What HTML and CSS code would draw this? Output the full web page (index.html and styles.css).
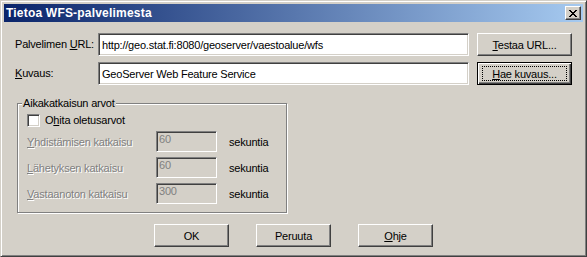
FILE: index.html
```html
<html>
<head>
    <meta charset="UTF-8">
    <title>Tietoa WFS-palvelimesta</title>
    <link rel="stylesheet" href="styles.css">
</head>
<body>
<div class="window">
    <div class="titlebar">
        <span class="title">Tietoa WFS-palvelimesta</span>
        <span class="close-btn">
            <svg width="8" height="7" viewBox="0 0 8 7" shape-rendering="crispEdges">
                <path d="M0 0h2v1h-2z M6 0h2v1h-2z M1 1h2v1h-2z M5 1h2v1h-2z M2 2h4v1h-4z M3 3h2v1h-2z M2 4h4v1h-4z M1 5h2v1h-2z M5 5h2v1h-2z M0 6h2v1h-2z M6 6h2v1h-2z" fill="#000"/>
            </svg>
        </span>
    </div>

    <div class="dialog-body">
        <div class="field-row">
            <label class="field-label" for="server-url">Palvelimen <u>U</u>RL:</label>
            <input class="edit wide" type="text" id="server-url" value="http://geo.stat.fi:8080/geoserver/vaestoalue/wfs">
            <button class="button side-btn"><u>T</u>estaa URL...</button>
        </div>

        <div class="field-row">
            <label class="field-label" for="description"><u>K</u>uvaus:</label>
            <input class="edit wide" type="text" id="description" value="GeoServer Web Feature Service">
            <button class="button side-btn default"><span class="focus-ring"><u>H</u>ae kuvaus...</span></button>
        </div>

        <div class="group">
            <span class="group-title">Aikakatkaisun arvot</span>
            <label class="check-row">
                <span class="checkbox"></span>
                <span>O<u>h</u>ita oletusarvot</span>
            </label>

            <div class="timeout-grid">
                <span class="disabled-text"><u>Y</u>hdistämisen katkaisu</span>
                <input class="edit disabled" type="text" value="60" disabled>
                <span class="unit">sekuntia</span>

                <span class="disabled-text"><u>L</u>ähetyksen katkaisu</span>
                <input class="edit disabled" type="text" value="60" disabled>
                <span class="unit">sekuntia</span>

                <span class="disabled-text"><u>V</u>astaanoton katkaisu</span>
                <input class="edit disabled" type="text" value="300" disabled>
                <span class="unit">sekuntia</span>
            </div>
        </div>

        <div class="actions">
            <button class="button dialog-btn">OK</button>
            <button class="button dialog-btn">Peruuta</button>
            <button class="button dialog-btn"><u>O</u>hje</button>
        </div>
    </div>
</div>
</body>
</html>
```

FILE: styles.css
```css
:root {
    --face: #D4D0C8;
    --shadow: #808080;
    --dark-shadow: #404040;
    --highlight: #FFFFFF;
}

body, html {
    margin: 0;
    padding: 0;
    background-color: var(--face);
    font-family: 'Liberation Sans', Arial, sans-serif;
    font-size: 11px;
    letter-spacing: -0.2px;
    color: #000;
}

u {
    text-decoration: underline;
    text-underline-offset: 1px;
}

.window {
    box-sizing: border-box;
    width: 587px;
    height: 257px;
    background-color: var(--face);
    border: 1px solid;
    border-color: var(--face) var(--dark-shadow) var(--dark-shadow) var(--face);
    box-shadow: inset 1px 1px 0 var(--highlight), inset -1px -1px 0 var(--shadow);
    padding: 3px;
    display: flex;
    flex-direction: column;
}

.titlebar {
    height: 18px;
    display: flex;
    align-items: center;
    justify-content: space-between;
    background: linear-gradient(to right, #0A246A, #A6CAF0);
    padding: 0 2px;
}

.title {
    color: white;
    font-weight: bold;
    font-size: 12px;
    letter-spacing: 0.2px;
    line-height: 14px;
}

.close-btn {
    box-sizing: border-box;
    width: 16px;
    height: 14px;
    display: flex;
    align-items: center;
    justify-content: center;
    background-color: var(--face);
    border: 1px solid;
    border-color: var(--highlight) var(--dark-shadow) var(--dark-shadow) var(--highlight);
    box-shadow: inset -1px -1px 0 var(--shadow);
}

.close-btn svg {
    display: block;
    margin: 0 1px 0 0;
}

.dialog-body {
    display: flex;
    flex-direction: column;
    padding: 11px 11px 0 11px;
}

.field-row {
    display: flex;
    align-items: center;
    height: 23px;
    margin-bottom: 6px;
}

.field-label {
    width: 83px;
    flex-shrink: 0;
    line-height: 13px;
}

.edit {
    box-sizing: border-box;
    height: 23px;
    margin: 0;
    padding: 0 3px;
    font-family: 'Liberation Sans', Arial, sans-serif;
    font-size: 11px;
    letter-spacing: -0.2px;
    color: #000;
    background-color: white;
    border: 1px solid;
    border-color: var(--shadow) var(--highlight) var(--highlight) var(--shadow);
    box-shadow: inset 1px 1px 0 var(--dark-shadow), inset -1px -1px 0 var(--face);
    outline: none;
}

.edit.wide {
    width: 371px;
}

.edit.disabled {
    width: 61px;
    height: 21px;
    padding: 0 3px 5px 2px;
    background-color: var(--face);
    color: var(--shadow);
    -webkit-text-fill-color: var(--shadow);
}

.button {
    box-sizing: border-box;
    height: 23px;
    margin: 0;
    padding: 0;
    font-family: 'Liberation Sans', Arial, sans-serif;
    font-size: 11px;
    letter-spacing: -0.2px;
    color: #000;
    background-color: var(--face);
    border: 1px solid;
    border-color: var(--highlight) var(--dark-shadow) var(--dark-shadow) var(--highlight);
    box-shadow: inset -1px -1px 0 var(--shadow);
    cursor: pointer;
}

.side-btn {
    width: 95px;
    margin-left: 8px;
}

.button.default {
    border: 1px solid #000;
    box-shadow: inset 1px 1px 0 var(--highlight), inset -1px -1px 0 var(--dark-shadow), inset -2px -2px 0 var(--shadow);
    padding: 3px 4px;
    display: flex;
}

.focus-ring {
    flex: 1;
    display: flex;
    align-items: center;
    justify-content: center;
    outline: 1px dotted #000;
    outline-offset: -1px;
}

.group {
    position: relative;
    box-sizing: border-box;
    width: 270px;
    height: 110px;
    margin: 12px 0 0 2px;
    padding: 10px 0 0 9px;
    border: 1px solid var(--shadow);
    box-shadow: 1px 1px 0 var(--highlight), inset 1px 1px 0 var(--highlight);
}

.group-title {
    position: absolute;
    top: -7px;
    left: 4px;
    padding: 0 1px 0 1px;
    line-height: 13px;
    background-color: var(--face);
}

.check-row {
    display: flex;
    align-items: center;
    gap: 5px;
    height: 13px;
    line-height: 13px;
}

.checkbox {
    box-sizing: border-box;
    width: 13px;
    height: 13px;
    background-color: white;
    border: 1px solid;
    border-color: var(--shadow) var(--highlight) var(--highlight) var(--shadow);
    box-shadow: inset 1px 1px 0 var(--dark-shadow), inset -1px -1px 0 var(--face);
}

.timeout-grid {
    display: grid;
    grid-template-columns: 129px 61px auto;
    grid-auto-rows: 21px;
    row-gap: 5px;
    align-items: center;
    margin-top: 4px;
}

.unit {
    margin-left: 12px;
}

.disabled-text {
    color: var(--shadow);
    text-shadow: 1px 1px 0 var(--highlight);
}

.actions {
    display: flex;
    justify-content: center;
    gap: 27px;
    margin-top: 11px;
}

.dialog-btn {
    width: 75px;
}
```
